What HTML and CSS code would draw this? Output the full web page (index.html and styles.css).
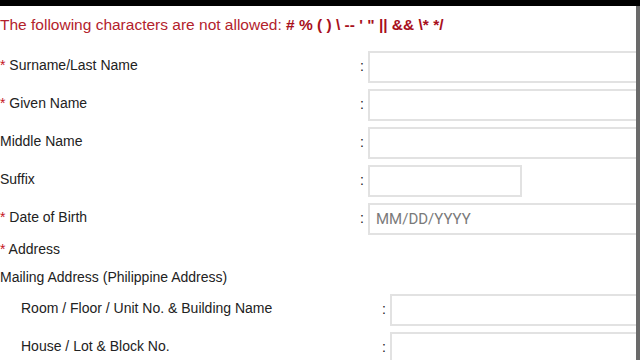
FILE: index.html
```html
<!DOCTYPE html>
<html lang="en">
<head>
  <meta charset="UTF-8">
  <title>Personal Information</title>
  <meta name="viewport" content="width=device-width, initial-scale=1">
  <link rel="stylesheet" href="styles.css">
</head>
<body>
  <div class="topbar"></div>
  <div class="page">
    <p class="notice">The following characters are not allowed: <b># % ( ) \ -- ' " || &amp;&amp; \* */</b></p>

    <div class="form">
      <div class="row">
        <label><span class="req">*</span> Surname/Last Name</label>
        <span class="colon">:</span>
        <input type="text">
      </div>
      <div class="row">
        <label><span class="req">*</span> Given Name</label>
        <span class="colon">:</span>
        <input type="text">
      </div>
      <div class="row">
        <label>Middle Name</label>
        <span class="colon">:</span>
        <input type="text">
      </div>
      <div class="row">
        <label>Suffix</label>
        <span class="colon">:</span>
        <input type="text" class="short">
      </div>
      <div class="row">
        <label><span class="req">*</span> Date of Birth</label>
        <span class="colon">:</span>
        <input type="text" placeholder="MM/DD/YYYY">
      </div>

      <div class="heading"><span class="req">*</span> Address</div>
      <div class="subheading">Mailing Address (Philippine Address)</div>

      <div class="nested">
        <div class="row">
          <label>Room / Floor / Unit No. &amp; Building Name</label>
          <span class="colon">:</span>
          <input type="text">
        </div>
        <div class="row">
          <label>House / Lot &amp; Block No.</label>
          <span class="colon">:</span>
          <input type="text">
        </div>
      </div>
    </div>
  </div>
</body>
</html>
```

FILE: styles.css
```css
body {
  margin: 0;
  font-family: "Liberation Sans", Arial, sans-serif;
  font-size: 14px;
  color: #222;
  background: #fff;
  height: 360px;
  overflow: hidden;
}
.topbar {
  height: 6px;
  background: #000;
}
.page {
  border-right: 4px solid #6a6a6a;
  height: 354px;
  overflow: hidden;
}
.notice {
  margin: 0;
  padding-top: 9px;
  font-size: 15.5px;
  line-height: 20px;
  color: #b3222c;
}
.notice b {
  color: #a8101c;
}
.form {
  margin-top: 16px;
}
.row {
  display: grid;
  grid-template-columns: 360px 8px 1fr;
  align-items: start;
  margin-bottom: 6px;
}
.row label,
.colon {
  line-height: 20px;
  margin-top: 4px;
}
.colon {
  margin-top: 5px;
}
.req {
  color: #c4141e;
}
.row input {
  box-sizing: border-box;
  height: 32px;
  width: 300px;
  border: 2px solid #e2e2e2;
  padding: 0 6px;
  font-family: Roboto, "Noto Sans", sans-serif;
  font-size: 15px;
  color: #333;
  outline: none;
}
.row input.short {
  width: 154px;
}
.row input::placeholder {
  color: #7a7a7a;
}
.heading {
  line-height: 20px;
  margin-top: -2px;
}
.subheading {
  line-height: 20px;
  margin-top: 8px;
}
.nested {
  margin-top: 7px;
  padding-left: 21px;
}
.nested .row {
  grid-template-columns: 361px 8px 1fr;
}
```
